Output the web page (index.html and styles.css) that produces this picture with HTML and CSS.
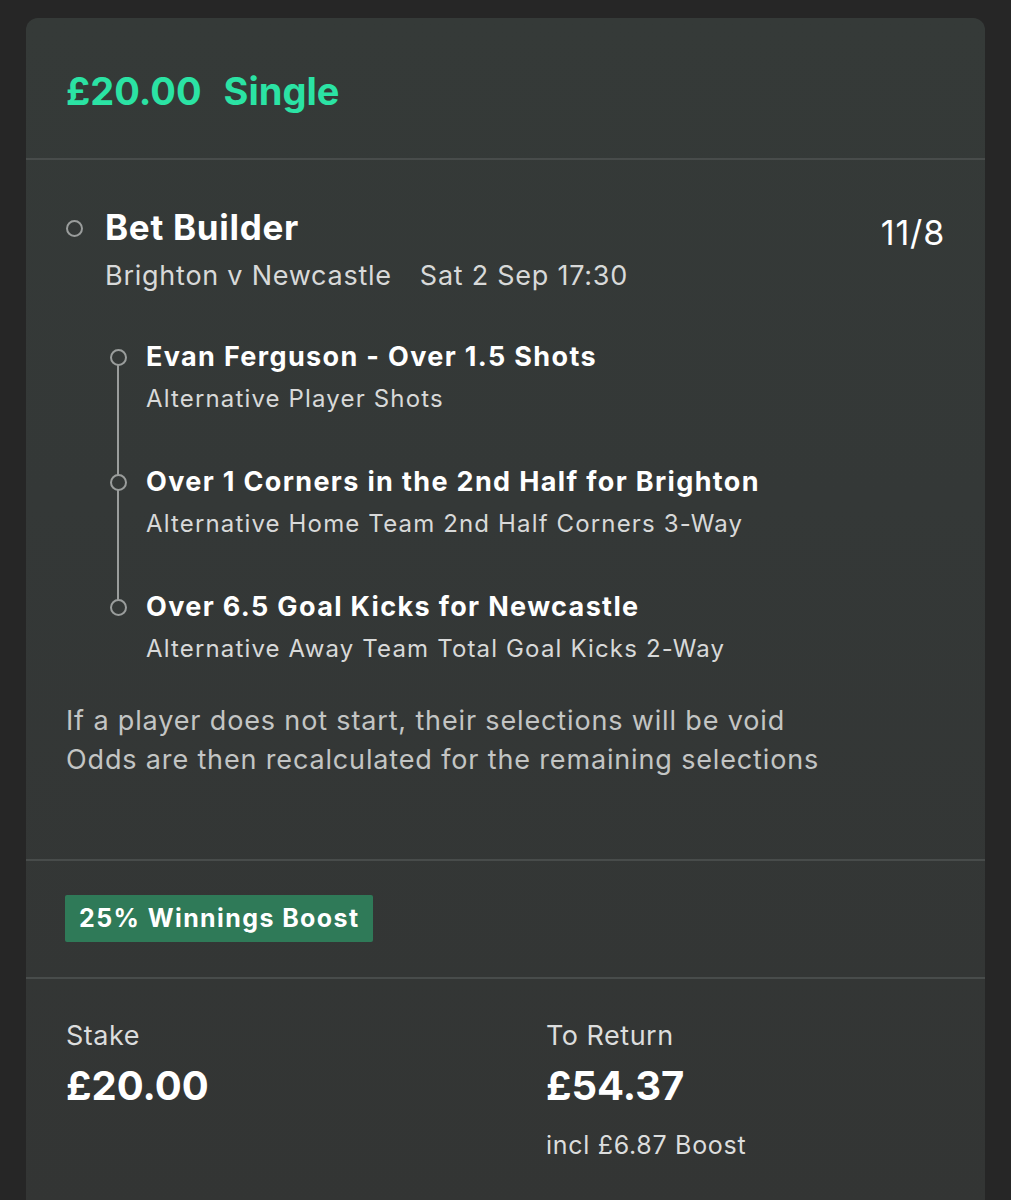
FILE: index.html
```html
<!DOCTYPE html>
<html lang="en">
<head>
<meta charset="utf-8">
<link rel="stylesheet" href="styles.css">
</head>
<body>
<div class="card">
  <div class="header">
    <span class="hdr-amount">£20.00</span><span class="hdr-type">Single</span>
  </div>
  <div class="bet">
    <div class="bet-top">
      <span class="dot big"></span>
      <div class="bet-info">
        <div class="bet-title">Bet Builder</div>
        <div class="bet-match"><span>Brighton v Newcastle</span><span class="bet-time">Sat 2 Sep 17:30</span></div>
      </div>
      <div class="odds">11/8</div>
    </div>
    <div class="legs">
      <div class="leg">
        <span class="dot"></span>
        <div class="leg-title">Evan Ferguson - Over 1.5 Shots</div>
        <div class="leg-sub">Alternative Player Shots</div>
      </div>
      <div class="leg">
        <span class="dot"></span>
        <div class="leg-title">Over 1 Corners in the 2nd Half for Brighton</div>
        <div class="leg-sub">Alternative Home Team 2nd Half Corners 3-Way</div>
      </div>
      <div class="leg last">
        <span class="dot"></span>
        <div class="leg-title">Over 6.5 Goal Kicks for Newcastle</div>
        <div class="leg-sub">Alternative Away Team Total Goal Kicks 2-Way</div>
      </div>
    </div>
    <p class="note">If a player does not start, their selections will be void<br>Odds are then recalculated for the remaining selections</p>
  </div>
  <div class="boost">
    <span class="badge">25% Winnings Boost</span>
  </div>
  <div class="totals">
    <div class="col">
      <div class="lbl">Stake</div>
      <div class="val">£20.00</div>
    </div>
    <div class="col">
      <div class="lbl">To Return</div>
      <div class="val">£54.37</div>
      <div class="incl">incl £6.87 Boost</div>
    </div>
  </div>
</div>
</body>
</html>
```

FILE: styles.css
```css
* { box-sizing: border-box; }
html, body { margin: 0; padding: 0; }
body {
  background: #262626;
  font-family: Inter, "Noto Sans", "Liberation Sans", sans-serif;
  color: #fff;
  height: 1200px;
  overflow: hidden;
}
.card {
  margin: 18px 0 0 26px;
  width: 959px;
  height: 1200px;
  background: linear-gradient(180deg, #353a38 0%, #343837 40%, #333534 100%);
  border-radius: 12px 12px 0 0;
}
.header {
  height: 142px;
  border-bottom: 2px solid #484c4b;
  padding: 6px 40px 0 40px;
  display: flex;
  align-items: center;
  color: #2be3a4;
  font-size: 38px;
  font-weight: 700;
}
.hdr-amount { margin-right: 22px; }
.bet {
  height: 701px;
  border-bottom: 2px solid #484c4b;
  padding: 46px 40px 0 40px;
}
.bet-top {
  display: flex;
  align-items: flex-start;
}
.dot {
  display: block;
  width: 17px;
  height: 17px;
  border: 2px solid #9a9d9c;
  border-radius: 50%;
  background: #343837;
  flex: none;
}
.dot.big { margin: 14px 22px 0 0; }
.bet-info { flex: 1; }
.bet-title {
  font-size: 35px;
  font-weight: 700;
  line-height: 42px;
  letter-spacing: 0.7px;
}
.bet-match {
  margin-top: 12px;
  font-size: 27px;
  line-height: 32px;
  letter-spacing: 0.75px;
  color: #d8d9d9;
}
.bet-time { margin-left: 28px; }
.odds {
  font-size: 34px;
  line-height: 42px;
  letter-spacing: 0.8px;
  margin-top: 6px;
}
.legs {
  margin: 48px 0 0 44px;
  position: relative;
}
.leg {
  position: relative;
  padding-left: 36px;
  height: 125px;
}
.leg.last { height: 86px; }
.leg .dot {
  position: absolute;
  left: 0;
  top: 9px;
  z-index: 1;
}
.leg::before {
  content: "";
  position: absolute;
  left: 7px;
  top: 20px;
  width: 2px;
  height: 125px;
  background: #9a9d9c;
}
.leg.last::before { display: none; }
.leg-title {
  font-size: 27px;
  font-weight: 700;
  line-height: 34px;
  letter-spacing: 1.35px;
}
.leg-sub {
  margin-top: 10px;
  font-size: 24px;
  line-height: 30px;
  letter-spacing: 1.15px;
  color: #d8d9d9;
}
.note {
  margin: 25px 0 0 0;
  font-size: 27px;
  line-height: 39px;
  letter-spacing: 0.85px;
  color: #c3c5c4;
}
.boost {
  height: 118px;
  border-bottom: 2px solid #484c4b;
  padding: 34px 40px 0 39px;
}
.badge {
  display: inline-block;
  background: #2f7a58;
  color: #fff;
  font-size: 25px;
  font-weight: 700;
  letter-spacing: 1.4px;
  height: 47px;
  line-height: 46px;
  padding: 0 13px 0 14px;
  border-radius: 2px;
}
.totals {
  display: flex;
  padding: 40px 40px 0 40px;
}
.col { width: 480px; flex: none; }
.col + .col { width: auto; flex: 1; }
.lbl {
  font-size: 27px;
  line-height: 34px;
  letter-spacing: 0.5px;
  color: #dcdddd;
}
.val {
  margin-top: 10px;
  font-size: 40px;
  font-weight: 700;
  line-height: 46px;
}
.incl {
  margin-top: 20px;
  font-size: 25px;
  line-height: 32px;
  letter-spacing: 0.7px;
  color: #dcdddd;
}
```
